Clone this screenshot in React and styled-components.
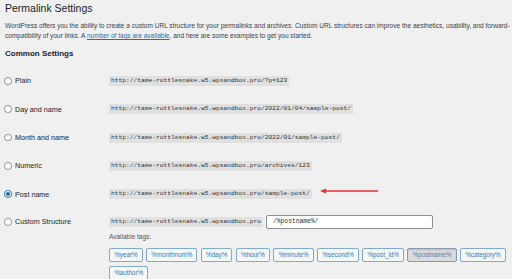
import React from 'react';
import styled, { createGlobalStyle } from 'styled-components';

const GlobalStyle = createGlobalStyle`
  html, body {
    margin: 0;
    padding: 0;
    background: #f0f0f1;
  }
  body {
    font-family: "Liberation Sans", Arial, sans-serif;
    color: #1d2327;
  }
`;

const Page = styled.div`
  width: 512px;
  height: 279px;
  overflow: hidden;
  box-sizing: border-box;
  padding: 2px 5px 0 4px;
`;

const Title = styled.h1`
  margin: 0 0 0 1px;
  font-size: 10.5px;
  line-height: 13px;
  font-weight: 400;
  color: #1d2327;
`;

const Description = styled.p`
  margin: 6px 0 0 1px;
  font-size: 6.55px;
  line-height: 10px;
  color: #3c434a;
  white-space: nowrap;
`;

const Link = styled.a`
  color: #2271b1;
  text-decoration: underline;
`;

const SectionTitle = styled.h2`
  margin: 7px 0 0 1px;
  font-size: 8px;
  line-height: 11px;
  font-weight: 700;
  color: #1d2327;
`;

const Options = styled.div`
  margin-top: 7.8px;
  display: flex;
  flex-direction: column;
`;

const Row = styled.div`
  display: flex;
  align-items: center;
  height: 28.3px;
`;

const CustomRow = styled.div`
  display: flex;
  align-items: flex-start;
  padding-top: 6.7px;
`;

const LabelCell = styled.label`
  width: 105px;
  flex-shrink: 0;
  display: flex;
  align-items: center;
  height: 14px;
  font-size: 7.2px;
  color: #1d2327;
`;

const Radio = styled.span`
  width: 7.5px;
  height: 7.5px;
  box-sizing: border-box;
  border-radius: 50%;
  border: 1px solid ${({ checked }) => (checked ? '#2271b1' : '#8c8f94')};
  background: #fff;
  margin-right: 3.5px;
  display: flex;
  align-items: center;
  justify-content: center;
  flex-shrink: 0;
  &::after {
    content: '';
    display: ${({ checked }) => (checked ? 'block' : 'none')};
    width: 3.5px;
    height: 3.5px;
    border-radius: 50%;
    background: #2271b1;
  }
`;

const ContentCell = styled.div`
  display: flex;
  flex-direction: column;
`;

const Line = styled.div`
  display: flex;
  align-items: center;
  height: 14px;
`;

const Code = styled.code`
  font-family: "Liberation Mono", "DejaVu Sans Mono", monospace;
  font-size: 6.25px;
  line-height: 10px;
  height: 10px;
  padding: 0 2px;
  background: #e0e0e1;
  color: #2c3338;
  white-space: nowrap;
`;

const StructureInput = styled.input`
  margin-left: 3px;
  width: 167px;
  height: 14px;
  box-sizing: border-box;
  border: 1px solid #8c8f94;
  border-radius: 2px;
  background: #fff;
  padding: 0 6px;
  font-family: "Liberation Mono", "DejaVu Sans Mono", monospace;
  font-size: 6.3px;
  color: #2c3338;
  outline: none;
`;

const Arrow = styled.svg`
  margin-left: 8px;
  display: block;
`;

const TagsLabel = styled.p`
  margin: 3px 0 0 0;
  font-size: 6.5px;
  line-height: 10px;
  color: #50575e;
`;

const TagList = styled.div`
  margin-top: 6px;
  width: 398px;
  display: flex;
  flex-wrap: wrap;
  gap: 4px 3.3px;
`;

const Tag = styled.button`
  height: 14px;
  box-sizing: border-box;
  padding: 0 4.2px;
  border-radius: 2px;
  border: 1px solid ${({ active }) => (active ? '#8a9ab0' : '#7eaad8')};
  background: ${({ active }) => (active ? '#dcdcde' : '#f6f7f7')};
  box-shadow: ${({ active }) => (active ? 'inset 0 1px 2px rgba(0,0,0,0.15)' : 'none')};
  color: ${({ active }) => (active ? '#4a7cab' : '#2f7bc0')};
  font-family: "Liberation Sans", Arial, sans-serif;
  font-size: 6.3px;
  line-height: 12px;
  white-space: nowrap;
  cursor: pointer;
`;

const base = 'http://tame-rottlesnake.w5.wpsandbox.pro';

const options = [
  { id: 'plain', label: 'Plain', example: `${base}/?p=123` },
  { id: 'day', label: 'Day and name', example: `${base}/2022/01/04/sample-post/` },
  { id: 'month', label: 'Month and name', example: `${base}/2022/01/sample-post/` },
  { id: 'numeric', label: 'Numeric', example: `${base}/archives/123` },
  { id: 'post', label: 'Post name', example: `${base}/sample-post/`, checked: true },
];

const tags = [
  '%year%', '%monthnum%', '%day%', '%hour%', '%minute%', '%second%',
  '%post_id%', '%postname%', '%category%', '%author%',
];

const App = () => (
  <>
    <GlobalStyle />
    <Page>
      <Title>Permalink Settings</Title>
      <Description>
        WordPress offers you the ability to create a custom URL structure for your permalinks and archives. Custom URL structures can improve the aesthetics, usability, and forward-
        <br />
        compatibility of your links. A
        {' '}
        <Link href="#tags">number of tags are available</Link>
        , and here are some examples to get you started.
      </Description>
      <SectionTitle>Common Settings</SectionTitle>
      <Options>
        {options.map((opt) => (
          <Row key={opt.id}>
            <LabelCell>
              <Radio checked={opt.checked} />
              {opt.label}
            </LabelCell>
            <Code>{opt.example}</Code>
            {opt.checked && (
              <Arrow width="58" height="12" viewBox="0 0 58 12">
                <line x1="4" y1="3" x2="58" y2="3" stroke="#e8302d" strokeWidth="1.3" />
                <polygon points="0,3 6,0.5 6,5.5" fill="#e8302d" />
              </Arrow>
            )}
          </Row>
        ))}
        <CustomRow>
          <LabelCell>
            <Radio />
            Custom Structure
          </LabelCell>
          <ContentCell>
            <Line>
              <Code>{base}</Code>
              <StructureInput defaultValue="/%postname%/" />
            </Line>
            <TagsLabel>Available tags:</TagsLabel>
            <TagList>
              {tags.map((tag) => (
                <Tag key={tag} type="button" active={tag === '%postname%'}>
                  {tag}
                </Tag>
              ))}
            </TagList>
          </ContentCell>
        </CustomRow>
      </Options>
    </Page>
  </>
);

export default App;
